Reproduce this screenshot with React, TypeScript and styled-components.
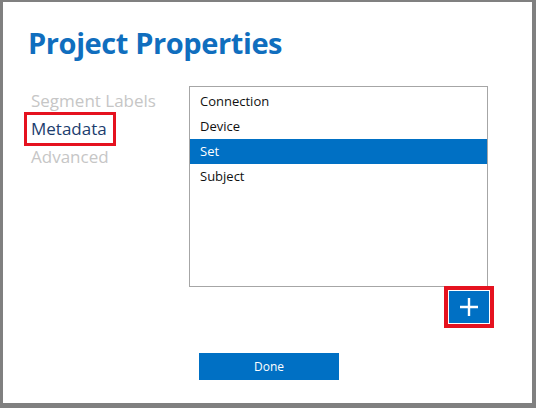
import styled, { createGlobalStyle } from "styled-components";

const GlobalStyle = createGlobalStyle`
  html, body {
    margin: 0;
    padding: 0;
    background: #ffffff;
  }
  * {
    box-sizing: border-box;
  }
`;

const Frame = styled.div`
  width: 536px;
  height: 408px;
  background: #ffffff;
  border-style: solid;
  border-color: #808080;
  border-width: 2px 4px 5px 3px;
  font-family: "Open Sans", "Noto Sans", sans-serif;
  display: flex;
  flex-direction: column;
  overflow: hidden;
`;

const Title = styled.h1`
  margin: 22px 0 0 25px;
  font-size: 29px;
  line-height: 38px;
  font-weight: 700;
  color: #106ebe;
  letter-spacing: -0.4px;
`;

const Body = styled.div`
  display: grid;
  grid-template-columns: 162px 299px;
  padding-left: 24px;
  margin-top: 24px;
`;

const Nav = styled.nav`
  display: flex;
  flex-direction: column;
  align-items: flex-start;
  padding-top: 1px;
`;

const NavItem = styled.div<{ $active?: boolean }>`
  height: 28px;
  line-height: 28px;
  padding: 0 6px 0 4px;
  font-size: 17px;
  color: ${(p) => (p.$active ? "#1c3d6e" : "#c6c6c6")};
  outline: ${(p) => (p.$active ? "3px solid #e5121f" : "none")};
  white-space: nowrap;
`;

const Side = styled.div`
  display: flex;
  flex-direction: column;
  align-items: flex-start;
`;

const List = styled.ul`
  list-style: none;
  margin: 0;
  padding: 2px 0 0;
  width: 299px;
  height: 201px;
  border: 1px solid #a6a6a6;
`;

const Item = styled.li<{ $selected?: boolean }>`
  height: 25px;
  line-height: 25px;
  padding-left: 10px;
  font-size: 13px;
  color: ${(p) => (p.$selected ? "#ffffff" : "#111111")};
  background: ${(p) => (p.$selected ? "#0070c4" : "transparent")};
`;

const AddButton = styled.button`
  align-self: flex-end;
  margin: 3px -2px 0 0;
  width: 42px;
  height: 34px;
  padding: 0;
  border: 1px solid #ffffff;
  background: #0070c4;
  outline: 4px solid #e5121f;
  display: flex;
  align-items: center;
  justify-content: center;
`;

const DoneButton = styled.button`
  margin: 29px 0 0 10px;
  width: 140px;
  height: 27px;
  border: none;
  padding: 0;
  background: #0070c4;
  color: #ffffff;
  font-family: "Open Sans", "Noto Sans", sans-serif;
  font-size: 12px;
`;

const items = ["Connection", "Device", "Set", "Subject"];

export default function App() {
  return (
    <>
      <GlobalStyle />
      <Frame>
        <Title>Project Properties</Title>
        <Body>
          <Nav>
            <NavItem>Segment Labels</NavItem>
            <NavItem $active>Metadata</NavItem>
            <NavItem>Advanced</NavItem>
          </Nav>
          <Side>
            <List>
              {items.map((name) => (
                <Item key={name} $selected={name === "Set"}>
                  {name}
                </Item>
              ))}
            </List>
            <AddButton aria-label="Add">
              <svg width="18" height="18" viewBox="0 0 18 18">
                <path d="M9 0v18M0 9h18" stroke="#ffffff" strokeWidth="2.4" fill="none" />
              </svg>
            </AddButton>
            <DoneButton>Done</DoneButton>
          </Side>
        </Body>
      </Frame>
    </>
  );
}
